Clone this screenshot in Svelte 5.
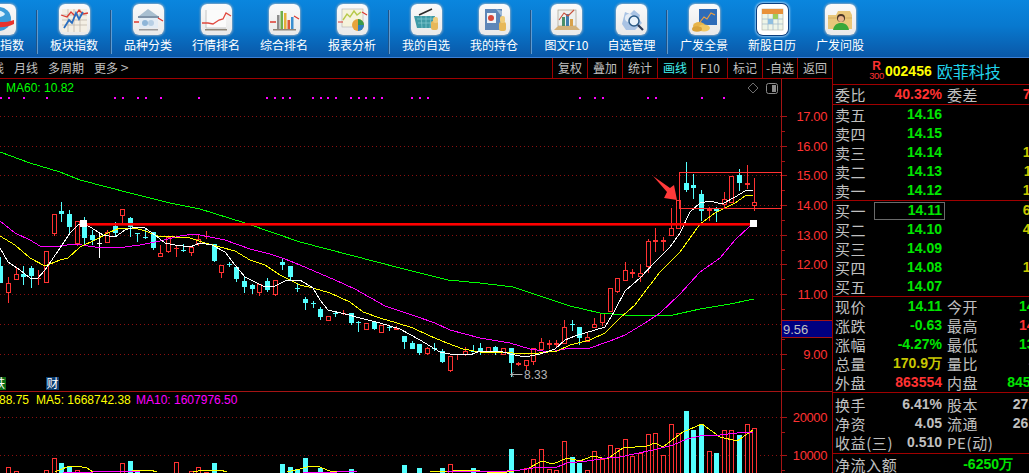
<script>
  // Candle geometry in page pixels, read off the chart: [bodyTop, bodyBottom, high, low, colour]
  const r = 'r', c = 'c', w = 'w';
  const candles = [
    [266,283,257,283,c],[283,292,277,303,r],[274,279,267,279,r],[274,277,266,285,c],[268,276,266,288,c],
    [278,279,270,285,r],[251,282,251,283,r],[214,233,214,236,r],[211,214,202,222,c],[214,227,210,233,c],
    [221,243,221,246,r],[221,238,217,244,c],[235,240,230,245,c],[243,244,233,258,w],[232,242,230,243,r],
    [226,233,222,237,c],[209,215,209,223,r],[218,227,217,237,c],[233,234,233,242,c],[237,238,228,239,c],
    [232,248,232,250,c],[253,256,245,257,r],[237,251,237,253,r],[248,249,245,257,r],[250,251,244,252,c],
    [247,252,247,256,r],[239,243,235,246,r],[236,237,231,239,r],[244,261,244,262,c],[265,272,265,278,r],
    [264,265,262,267,c],[267,279,267,282,c],[281,287,277,293,c],[285,289,284,294,c],[284,292,284,296,r],
    [281,290,278,292,c],[280,294,280,296,r],[262,265,259,270,c],[266,277,266,280,c],[288,289,284,292,c],
    [299,303,297,310,c],[303,304,301,308,c],[309,317,307,320,c],[316,320,316,320,r],[313,314,311,317,c],
    [313,314,310,315,r],[313,323,313,325,c],[322,323,321,332,c],[323,329,323,330,r],[322,329,322,330,c],
    [325,332,325,332,r],[327,328,326,331,c],[328,330,326,330,r],[336,342,336,349,c],[343,349,341,349,c],
    [344,353,344,355,c],[348,353,347,355,r],[348,349,343,351,c],[351,362,349,363,c],[356,370,356,372,r],
    [354,355,354,360,r],[351,354,347,356,r],[351,352,345,352,c],[348,352,343,355,c],[347,351,347,351,r],
    [347,351,346,355,c],[348,354,348,354,r],[348,363,348,377,c],[363,365,362,366,r],[360,365,360,370,r],
    [348,361,348,365,r],[342,349,338,349,r],[343,345,340,349,r],[343,345,340,347,r],[327,343,320,343,r],
    [324,325,320,331,c],[327,338,327,345,c],[337,341,332,341,r],[324,327,318,327,r],[313,322,313,326,r],
    [288,311,288,311,r],[278,291,278,293,r],[270,280,262,281,r],[272,274,269,278,r],[273,276,264,282,r],
    [241,266,239,273,r],[240,242,228,252,r],[240,242,237,251,r],[228,235,208,235,r],[200,228,200,228,r],
    [183,190,162,192,c],[185,188,174,199,c],[194,211,190,221,c],[209,211,207,221,r],[209,211,207,222,c],
    [199,204,192,208,r],[176,202,176,202,r],[175,183,169,191,c],[183,185,165,189,r],[202,205,178,211,r]
  ];
  const cx = (i) => Math.round(0.4 + 7.615 * i);

  const ma60 = '0,152 30,163 60,172 80,180 130,193 170,203 200,209 245,223 300,242 350,255 400,268 448,280 480,283 513,287 570,306 600,313 625,315 673,315 700,309 730,304 754,299';
  const ma5 = '0,248 8,262 20,270 30,278 38,278 45,270 60,248 70,233 78,225 85,224 95,230 103,235 115,237 125,230 135,227 145,228 155,235 165,243 175,245 190,247 200,243 212,245 225,252 235,265 245,277 255,282 265,287 275,286 285,281 300,280 313,288 320,300 328,310 345,314 360,318 380,323 400,329 420,340 440,352 450,354 470,355 480,351 500,351 510,354 525,357 540,354 555,349 565,340 575,336 605,327 615,310 625,291 640,278 655,262 670,247 680,233 690,212 700,203 710,201 722,204 735,197 745,191 753,190';
  const ma10 = '0,236 15,245 30,258 45,266 60,260 68,258 80,247 95,240 110,232 120,228 135,228 145,231 158,236 175,237 190,238 205,243 220,247 235,251 250,260 265,265 280,275 300,285 313,288 330,293 350,302 363,312 380,318 397,323 413,328 430,336 447,343 463,349 480,352 513,353 530,354 557,351 570,345 590,340 605,333 620,318 635,305 650,285 660,272 680,252 700,224 715,213 735,203 745,196 753,195';
  const ma20 = '0,221 15,233 30,240 40,246 60,246 75,244 95,247 110,247 125,247 140,245 160,241 180,236 195,234 205,236 225,240 250,249 270,254 285,259 300,265 335,280 355,289 385,306 415,316 435,323 450,330 480,338 510,343 530,349 550,352 570,348 590,348 610,341 625,335 645,323 660,313 680,294 700,272 720,258 735,240 750,226';

  const signalDots = [0,8,23,46,114,122,137,145,160,198,266,274,282,289,312,320,327,335,350,358,365,373,381,411,419,427,579,594,602,647,655,701,723];

  const priceLabels = [['17.00',116],['16.00',146],['15.00',175],['14.00',205],['13.00',235],['12.00',264],['11.00',294],['10.00',324],['9.00',354]];
  const volLabels = [['20000',417],['10000',455]];

  // index -> top of the volume bar; anything lower falls off the page
  const volTops = {1:467,2:471,6:470,7:458,8:463,9:467,10:470,16:463,17:461,18:472,23:462,25:471,26:467,27:472,28:463,37:464,38:467,39:469,40:458,42:468,46:469,53:465,55:468,58:468,59:464,62:468,67:449,69:468,70:459,71:449,72:469,73:470,74:441,75:457,76:463,77:470,78:451,79:459,80:445,81:448,82:439,83:456,84:453,85:434,86:433,87:455,88:424,89:433,90:411,91:430,92:425,93:451,94:453,95:430,96:430,97:435,98:424,99:428};
  const volBars = Object.entries(volTops).map(([i, top]) => ({ x: cx(+i), top, up: candles[+i][4] !== c }));

  const volYellow = [
    '55,472 67,467 77,466 87,468 93,472', '127,472 137,470 150,470 157,472', '193,472 203,470 220,470 227,472',
    '287,472 300,469 310,466 317,466 330,471 337,472',
    '430,472 453,471 473,470 487,472 507,472 527,469 542,461 553,464 567,458 580,461 593,456 607,459 623,448 647,446 655,443 663,447 683,432 702,424 720,437 737,441 753,430'
  ];
  const volMagenta = [
    '63,472 93,472 103,471 117,471 140,472', '303,472 337,472 357,471', '447,472 470,471 490,472 507,471 520,470 540,467 557,467 567,463 587,461 607,458 620,457 653,450 673,445 687,439 700,436 720,435 737,433 753,432'
  ];

  const tools = [
    ['globe','大盘指数'],null,['sheet','板块指数'],null,['board','品种分类'],['trend','行情排名'],['bars','综合排名'],['report','报表分析'],null,
    ['basket','我的自选'],['hold','我的持仓'],null,['book','图文F10','narrow'],['gear','自选管理','narrow'],null,
    ['screen','广发全景'],['calendar','新股日历','active'],['folder','广发问股']
  ];

  const tabs = ['复权','叠加','统计','画线','F10','标记','-自选','返回'];

  const asks = [['卖五','14.16',''],['卖四','14.15',''],['卖三','14.14','1820'],['卖二','14.13','1106'],['卖一','14.12','1433']];
  const bids = [['买一','14.11','6120'],['买二','14.10','4208'],['买三','14.09',''],['买四','14.08','1315'],['买五','14.07','']];
  const quote = [
    ['现价','14.11','g','今开','14.72','g'],
    ['涨跌','-0.63','g','最高','14.78','up'],
    ['涨幅','-4.27%','g','最低','13.86','g'],
    ['总量','170.9万','y','量比','-\u2003\u2002','up'],
    ['外盘','863554','up','内盘','845210','g']
  ];
  const extra = [
    ['换手','6.41%','股本','27.6亿'],
    ['净资','4.05','流通','26.6亿'],
    ['收益(三)','0.510','PE(动)','']
  ];
</script>

{#snippet icon(name)}
  <svg viewBox="0 0 31 31" width="31" height="31">
    {#if name === 'globe'}
      <circle cx="14" cy="15" r="12" fill="#3a9bd8"/><path d="M5 9c5-4 12-3 15 1-2 4-8 2-10 5-2 2-4-3-5-6z" fill="#dff1fb"/>
      <path d="M2 18c6-3 12 3 27-2v4c-10 5-20 3-27 1z" fill="#e8322c"/>
    {:else if name === 'sheet'}
      <rect x="3" y="5" width="25" height="23" fill="#f4efe4"/>
      <path d="M3 11h25M3 16h25M3 21h25M9 5v23M15 5v23M21 5v23" stroke="#b9b3a6" stroke-width=".7"/>
      <path d="M2 11l6 2 4-5 4 4 4-6 4 4 5-1" fill="none" stroke="#dc3a30" stroke-width="1.3"/>
      <path d="M5 24l5-8 3 3 4-10 3 6 4-7" fill="none" stroke="#2a6fc0" stroke-width="1.8"/>
    {:else if name === 'board'}
      <path d="M15 5l10 7H6z" fill="#a9bfd0"/><rect x="5" y="12" width="21" height="2" fill="#7f93a8"/>
      <rect x="6" y="14" width="19" height="10" fill="#e3ecf4"/><circle cx="12" cy="19" r="3" fill="#8fb6d8"/><circle cx="18" cy="19" r="3" fill="#b7cfe4"/>
      <path d="M1 18h5M25 14l5 3" stroke="#dc3a30" stroke-width="1.3"/><rect x="6" y="25" width="19" height="1.5" fill="#9a9a9a"/>
    {:else if name === 'trend'}
      <rect x="5" y="6" width="20" height="18" fill="#fbfbfb"/><path d="M5 6v18h20" fill="none" stroke="#c4c4c4"/>
      <path d="M1 19h6l5 1 6-4 4-1 3-6 5 3" fill="none" stroke="#e0483e" stroke-width="1.3"/><rect x="4" y="25" width="22" height="1.5" fill="#8d8578"/>
    {:else if name === 'bars'}
      <rect x="8" y="11" width="2.5" height="14" fill="#8c8c8c"/><rect x="11.5" y="7" width="2.5" height="18" fill="#6fae4a"/>
      <rect x="15" y="9" width="2.5" height="16" fill="#e4b03a"/><rect x="18.5" y="16" width="2.5" height="9" fill="#dc5a3a"/><rect x="22" y="13" width="2.5" height="12" fill="#3a8fd0"/>
      <path d="M1 18h6M25 12l5 3" stroke="#dc3a30" stroke-width="1.3"/><rect x="4" y="25" width="23" height="1.5" fill="#8d8578"/>
    {:else if name === 'report'}
      <rect x="5" y="5" width="21" height="18" fill="#f6f3dc" stroke="#b9b9b9" stroke-width=".7"/>
      <path d="M6 16l4-6 3 3 4-6 3 4 4-3" fill="none" stroke="#b7c94a" stroke-width="1.4"/>
      <circle cx="21" cy="21" r="6" fill="#e8a33a"/><path d="M21 21V15a6 6 0 016 6z" fill="#3a9a4a"/><path d="M21 21h6a6 6 0 01-6 6z" fill="#2f7fc0"/>
      <path d="M1 18h5M25 8l5 3" stroke="#dc3a30" stroke-width="1.2"/>
    {:else if name === 'basket'}
      <path d="M3 12h21l-3 12H6z" fill="#3f9aa6"/><path d="M6 15h16M7 19h14M10 12l1 12M15 12v12M20 12l-1 12" stroke="#86cbd2" stroke-width=".7"/>
      <path d="M8 11L21 5" stroke="#2a2a2a" stroke-width="1.6"/>
      <rect x="20" y="17" width="7" height="9" rx="2" fill="#e7b85a"/><rect x="22" y="13" width="5" height="6" rx="2" fill="#f0cd7c"/>
    {:else if name === 'hold'}
      <rect x="6" y="5" width="17" height="21" fill="#5d86b8"/><rect x="8" y="9" width="9" height="10" fill="#eef3f8"/><circle cx="12" cy="14" r="3" fill="#d9483a"/>
      <path d="M17 5l6 2v6z" fill="#9db9d6"/><rect x="20" y="18" width="7" height="9" rx="2" fill="#e7b85a"/><rect x="21" y="12" width="5" height="7" rx="2" fill="#f0cd7c"/>
    {:else if name === 'book'}
      <rect x="7" y="6" width="18" height="16" fill="#eef0ee" stroke="#a6a08e" stroke-width=".7"/>
      <rect x="11" y="13" width="3" height="9" fill="#4a8f6a"/><rect x="15" y="10" width="3" height="12" fill="#3f7fb0"/><rect x="19" y="15" width="3" height="7" fill="#d8a24a"/>
      <path d="M8 16l5-7 4 3 6-6" fill="none" stroke="#c9523e" stroke-width="1.1"/><path d="M3 26l4-4h18l4 4z" fill="#d3b27a"/>
    {:else if name === 'gear'}
      <path d="M6 20l3-12 5 2 4-4 6 5-1 4 3 4-7 7H10z" fill="#a9c3e4"/><circle cx="13" cy="14" r="4" fill="#e4ecf6"/>
      <circle cx="18" cy="17" r="5" fill="#eaf3fb" stroke="#2a5a86" stroke-width="1.5"/><path d="M22 21l5 5" stroke="#2a3a56" stroke-width="2.2"/>
    {:else if name === 'screen'}
      <rect x="10" y="5" width="18" height="16" fill="#2e6cb8"/><path d="M11 18l4-5 3 2 4-6 4 2" fill="none" stroke="#f0a040" stroke-width="1.2"/>
      <ellipse cx="10" cy="22" rx="6" ry="4" fill="#e7b44a"/><ellipse cx="15" cy="24" rx="6" ry="3.5" fill="#f0c862"/><ellipse cx="8" cy="25" rx="5" ry="2.8" fill="#d9a23a"/>
    {:else if name === 'calendar'}
      <rect x="5" y="5" width="21" height="21" fill="#eef5e8" stroke="#b9bcb0" stroke-width=".7"/><rect x="5" y="5" width="21" height="5" fill="#e8913a"/>
      <path d="M5 15h21M5 20h21M11 10v16M16 10v16M21 10v16" stroke="#9fb7c8" stroke-width=".7"/>
      <rect x="16" y="10" width="5" height="5" fill="#9ecb5a"/><rect x="11" y="15" width="5" height="5" fill="#8fbfe0"/>
    {:else if name === 'folder'}
      <path d="M3 11h8l2-4h12l2 4v14H3z" fill="#e9c77a"/><path d="M3 14h24" stroke="#c9a55a" stroke-width=".7"/>
      <circle cx="16" cy="14" r="4" fill="#4a3526"/><circle cx="16" cy="15" r="3" fill="#e8b48a"/><path d="M8 26c1-6 5-7 8-7s7 1 8 7z" fill="#3aa83a"/>
    {/if}
  </svg>
{/snippet}

<div class="app">
  <header class="toolbar">
    {#each tools as t}
      {#if t}
        <div class="tool" class:narrow={t[2] === 'narrow'}>
          <div class="tile" class:active={t[2] === 'active'}>{@render icon(t[0])}</div>
          <span>{t[1]}</span>
        </div>
      {:else}
        <i class="sep"></i>
      {/if}
    {/each}
  </header>

  <div class="body">
    <section class="left">
      <div class="subbar">
        <div class="periods">
          <span>周线</span><span>月线</span><span>多周期</span><span>更多 <em>&gt;</em></span>
        </div>
        <div class="tabs">
          {#each tabs as tab}
            <span class="tab" class:on={tab === '画线'}>{tab}</span>
          {/each}
        </div>
      </div>

      <svg class="chart" viewBox="0 79 832 394" width="832" height="394">
        <!-- grid -->
        {#each [...priceLabels, ...volLabels] as [, y]}
          <line class="dots" x1="0" x2="781" y1={y + 0.5} y2={y + 0.5}/>
          <line class="axis" x1="781" x2="787" y1={y + 0.5} y2={y + 0.5}/>
          <line class="axis" x1="781" x2="785" y1={y + 15.5} y2={y + 15.5}/>
        {/each}
        <line class="axis" x1="781.5" x2="781.5" y1="79" y2="473"/>
        <line class="axis" x1="0" x2="832" y1="391.5" y2="391.5"/>

        <!-- candles -->
        {#each candles as [top, bottom, high, low, kind], i}
          {@const x = cx(i)}
          <line class="wick {kind}" x1={x + 0.5} x2={x + 0.5} y1={high} y2={low}/>
          {#if kind === 'w'}
            <rect x={x - 2} y={top} width="5" height="1" fill="#fff"/>
          {:else if kind === 'c' || bottom - top < 3}
            <rect class={kind} x={x - 2} y={top} width="5" height={Math.max(bottom - top, 1)}/>
          {:else}
            <rect class="hollow" x={x - 1.5} y={top + 0.5} width="4" height={bottom - top}/>
          {/if}
        {/each}

        <polyline class="ma" stroke="#00ff00" points={ma60}/>
        <polyline class="ma" stroke="#ff00ff" points={ma20}/>
        <polyline class="ma" stroke="#ffff00" points={ma10}/>
        <polyline class="ma" stroke="#ffffff" points={ma5}/>

        {#each signalDots as x}
          <rect x={x} y="97" width="2" height="2" fill="#ff00ff"/>
        {/each}

        <!-- drawn annotations -->
        <rect x="82" y="223" width="668" height="2.6" fill="#ff0000"/>
        <rect x="80" y="220" width="7" height="7" fill="#fff"/>
        <rect x="750" y="220" width="7" height="7" fill="#fff"/>
        <rect class="box" x="679.5" y="172.5" width="102" height="36"/>
        <polygon points="653,176 670,188 674,185 677,200 664,198 667,192" fill="#ff3a3a"/>

        <!-- volume -->
        {#each volBars as b}
          {#if b.up}
            <rect class="hollow" x={b.x - 1.5} y={b.top + 0.5} width="4" height={500 - b.top}/>
          {:else}
            <rect class="c" x={b.x - 2} y={b.top} width="5" height={500 - b.top}/>
          {/if}
        {/each}
        {#each volYellow as p}<polyline class="ma" stroke="#ffff00" points={p}/>{/each}
        {#each volMagenta as p}<polyline class="ma" stroke="#ff00ff" points={p}/>{/each}

        <!-- chart text -->
        <text class="legend" x="6" y="92" fill="#00ff00">MA60: 10.82</text>
        <text class="legend" x="-1" y="404" fill="#ffff00">88.75</text>
        <text class="legend" x="36" y="404" fill="#ffff00">MA5: 1668742.38</text>
        <text class="legend" x="136" y="404" fill="#ff00ff">MA10: 1607976.50</text>

        <path d="M753 83l5 5-5 5-5-5z" fill="none" stroke="#6e6e6e"/>
        <rect x="766.5" y="83.5" width="11" height="10" rx="2" fill="none" stroke="#8a8a8a"/>
        <rect x="772" y="85" width="4" height="7" fill="#8a8a8a"/>

        <path d="M510.5 374.5h12M510.5 374.5l3-2M510.5 374.5l3 2" stroke="#b4b4b4" fill="none"/>
        <text class="legend" x="524" y="379" fill="#b4b4b4">8.33</text>

        {#each priceLabels.filter(([label]) => label !== '10.00') as [label, y]}
          <text class="scale" x="827" y={y + 5} text-anchor="end">{label}</text>
        {/each}
        {#each volLabels as [label, y]}
          <text class="scale" x="827" y={y + 5} text-anchor="end">{label}</text>
        {/each}

        <rect x="782" y="321" width="50" height="16" fill="#000080"/>
        <line class="axis" x1="782" x2="832" y1="320.5" y2="320.5"/>
        <line class="axis" x1="782" x2="832" y1="337.5" y2="337.5"/>
        <text class="legend big" x="783" y="333.5" fill="#c0c0c0">9.56</text>

        <rect x="0" y="377" width="6" height="13" fill="#0a6b14"/>
        <text class="mark" x="-7" y="388">铁</text>
        <rect x="46" y="377" width="13" height="13" fill="#0a3c70"/>
        <text class="mark" x="46.5" y="388">财</text>
      </svg>
    </section>

    <aside class="panel">
      <div class="head">
        <div class="rank"><b>R</b><small>300</small></div>
        <b class="code">002456</b>
        <span class="name">欧菲科技</span>
      </div>

      <div class="group">
        <div class="row"><span>委比</span><b class="val up">40.32%</b><span class="l2">委差</span><b class="val2 up">7230</b></div>
      </div>

      <div class="group">
        {#each asks as [label, price, vol]}
          <div class="row"><span>{label}</span><b class="val g">{price}</b><span class="l2"></span><b class="val2 y">{vol}</b></div>
        {/each}
      </div>

      <div class="group">
        {#each bids as [label, price, vol], i}
          <div class="row" class:sel={i === 0}><span>{label}</span><b class="val g">{price}</b><span class="l2"></span><b class="val2 y">{vol}</b></div>
        {/each}
      </div>

      <div class="group">
        {#each quote as [a, b, bc, d, e, ec]}
          <div class="row"><span>{a}</span><b class="val {bc}">{b}</b><span class="l2">{d}</span><b class="val2 {ec}">{e}</b></div>
        {/each}
      </div>

      <div class="group stats">
        {#each extra as [a, b, d, e]}
          <div class="row"><span class="nowrap">{a}</span><b class="val">{b}</b><span class="l2 nowrap">{d}</span><b class="val2">{e}</b></div>
        {/each}
      </div>

      <div class="flow"><span>净流入额</span><b class="g">-6250万</b></div>
    </aside>
  </div>
</div>

<style>
  :global(body) {
    margin: 0;
    background: #000;
  }
  .app {
    width: 1029px;
    height: 473px;
    overflow: hidden;
    background: #000;
    font-family: "Noto Sans CJK SC", sans-serif;
  }

  .toolbar {
    display: flex;
    height: 57px;
    margin-left: -34px;
    width: 1063px;
    background: linear-gradient(#0a86de, #0879cf 45%, #0a58a8);
    border-bottom: 1px solid #3d80d6;
  }
  .tool {
    width: 68px;
    flex: none;
    display: flex;
    flex-direction: column;
    align-items: center;
    padding-top: 4px;
    color: #fff;
    font-size: 12px;
    line-height: 12px;
    white-space: nowrap;
  }
  .tool.narrow { width: 65px; }
  .tool span { margin-top: 4px; }
  .tile {
    width: 31px;
    height: 31px;
    border-radius: 6px;
    background: linear-gradient(#fafafa, #e9e9e9);
    box-shadow: 0 0 2px 1px rgba(150, 170, 190, 0.8);
  }
  .tile.active { box-shadow: 0 0 0 1px #0a3f80, 0 0 2px 2px #8cc4f0; background: #fff; }
  .sep {
    flex: none;
    width: 6px;
    height: 44px;
    margin-top: 10px;
    background: linear-gradient(90deg, transparent 2px, #1f5488 2px, #1f5488 3px, #5f9ad0 3px, #5f9ad0 4px, transparent 4px);
  }

  .body { display: flex; }
  .left { width: 832px; flex: none; }

  .subbar {
    display: flex;
    justify-content: space-between;
    height: 20px;
    border-bottom: 1px solid #a00000;
    font-size: 12px;
    line-height: 20px;
    color: #c0c0c0;
    white-space: nowrap;
  }
  .subbar em { font-style: normal; font-size: 14px; line-height: 14px; }
  .periods {
    display: flex;
    gap: 10px;
    margin-left: -20px;
  }
  .tabs { display: flex; }
  .tab {
    width: 35px;
    box-sizing: border-box;
    border-left: 1px solid #a00000;
    text-align: center;
  }
  .tab.on { color: #40f0f0; }

  .chart { display: block; overflow: hidden; }
  .ma {
    fill: none;
    stroke-width: 1;
    stroke-linejoin: bevel;
    shape-rendering: crispEdges;
  }
  .dots {
    stroke: #8a1010;
    stroke-dasharray: 1 3;
    shape-rendering: crispEdges;
  }
  .axis {
    stroke: #a51414;
    shape-rendering: crispEdges;
  }
  .wick { shape-rendering: crispEdges; }
  .wick.r { stroke: #ff3232; }
  .wick.c { stroke: #54ffff; }
  .wick.w { stroke: #fff; }
  rect.r { fill: #ff3232; }
  rect.c { fill: #54ffff; }
  .hollow {
    fill: #000;
    stroke: #ff3232;
    shape-rendering: crispEdges;
  }
  .box {
    fill: none;
    stroke: #ff3232;
    stroke-width: 1.4;
    shape-rendering: crispEdges;
  }
  .legend {
    font: 12px "Liberation Sans", sans-serif;
  }
  .legend.big { font-size: 13px; }
  .scale {
    font: 13px "Liberation Sans", sans-serif;
    letter-spacing: -0.4px;
    fill: #ff3232;
  }
  .mark {
    font: 12px "Noto Sans CJK SC", sans-serif;
    fill: #fff;
  }

  .panel {
    width: 240px;
    flex: none;
    border-left: 1px solid #a00000;
    color: #c0c0c0;
    font-size: 15px;
    letter-spacing: 0.6px;
    line-height: 19px;
  }
  .head {
    display: flex;
    align-items: center;
    height: 26px;
    padding-left: 36px;
    border-bottom: 1px solid #a00000;
  }
  .rank {
    display: flex;
    flex-direction: column;
    align-items: center;
    width: 15px;
    color: #ff3232;
  }
  .rank b { font: bold 12px/10px "Liberation Sans", sans-serif; letter-spacing: 0; }
  .rank small { font: 9.5px/10px "Liberation Sans", sans-serif; letter-spacing: -0.5px; }
  .code {
    margin-left: 1px;
    font: bold 14px "Liberation Sans", sans-serif;
    letter-spacing: 0;
    color: #ffff00;
  }
  .name {
    margin-left: 5px;
    font-size: 16px;
    letter-spacing: 0;
    color: #20d4ec;
  }

  .group {
    padding-bottom: 0;
    border-bottom: 1px solid #a00000;
  }
  .row {
    display: grid;
    grid-template-columns: 39px 71px 2px 56px 51px;
    height: 19px;
    padding-left: 2px;
  }
  .row > span:first-child { white-space: nowrap; }
  .val, .val2 {
    font: bold 14px/19px "Liberation Sans", sans-serif;
    letter-spacing: 0;
    text-align: right;
    color: #c0c0c0;
    white-space: pre;
  }
  .val {
    padding-right: 3px;
    box-sizing: border-box;
  }
  .l2 { grid-column: 4; white-space: nowrap; }
  .val2 { grid-column: 5; }
  .stats { padding: 2px 0 1px; }
  .nowrap { white-space: nowrap; }
  .sel .val {
    outline: 1px solid #6a6a6a;
    outline-offset: -1px;
    height: 18px;
    margin-top: 1px;
    line-height: 17px;
  }
  b.up { color: #ff3232; }
  b.g { color: #00e600; }
  b.y { color: #c8c800; }
  .flow {
    display: flex;
    justify-content: space-between;
    width: 178px;
    padding-left: 2px;
    margin-top: 1px;
  }
  .flow b { font: bold 14px/19px "Liberation Sans", sans-serif; letter-spacing: 0; }
</style>
